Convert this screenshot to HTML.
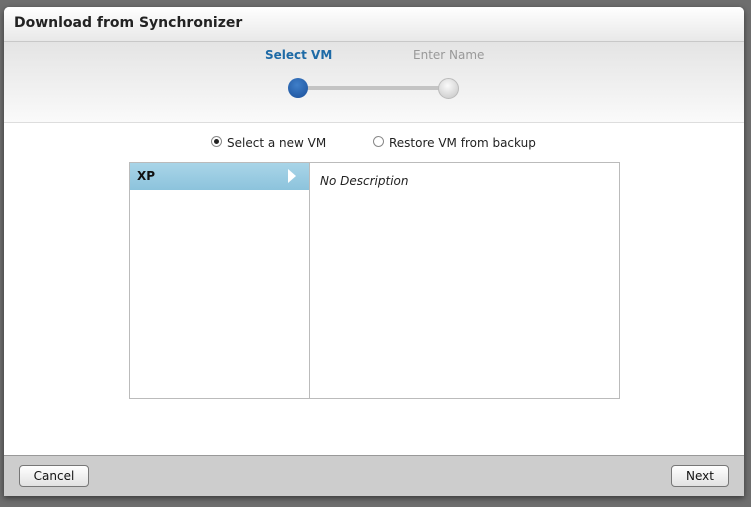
<!DOCTYPE html>
<html><head><style>
body{margin:0;width:751px;height:507px;background:#6e6e6e;font-family:"DejaVu Sans","Liberation Sans",sans-serif;overflow:hidden;position:relative}
.dlg{position:absolute;left:4px;top:7px;width:740px;height:489px;background:#fff;border-radius:5px 5px 0 0;overflow:hidden;box-shadow:0 2px 6px rgba(0,0,0,.5)}
.hdr{position:absolute;left:0;top:0;width:740px;height:34px;background:linear-gradient(#fff,#e8e8e8);border-bottom:1px solid #c8c8c8}
.hdr span{position:absolute;left:10px;top:8px;font-size:14px;font-weight:bold;color:#222}
.steps{position:absolute;left:0;top:35px;width:740px;height:80px;background:linear-gradient(#e4e4e4,#fafafa);border-bottom:1px solid #ddd}
.t{position:absolute;font-size:12px}
.line{position:absolute;left:300px;top:44px;width:140px;height:4px;background:#c4c4c4}
.c{position:absolute;width:20px;height:20px;border-radius:50%;top:36px}
.radio{position:absolute;top:129px;font-size:12px;color:#222}
.r{display:inline-block;width:9px;height:9px;border:1px solid #888;border-radius:50%;vertical-align:0;margin-right:5px;position:relative;background:#fff}
.box{position:absolute;left:125px;top:155px;width:489px;height:235px;border:1px solid #bbb}
.left{position:absolute;left:0;top:0;width:179px;height:235px;border-right:1px solid #bbb}
.sel{position:absolute;left:0;top:0;width:179px;height:27px;background:linear-gradient(#a9d5e8,#8cc3dc)}
.foot{position:absolute;left:0;top:448px;width:740px;height:41px;background:#cdcdcd;border-top:1px solid #999}
.btn{position:absolute;top:9px;height:20px;border:1px solid #777;border-radius:4px;background:linear-gradient(#fff,#e2e2e2);font-size:12px;text-align:center;line-height:20px;color:#111}
</style></head><body>
<div class="dlg">
<div class="hdr"><span>Download from Synchronizer</span></div>
<div class="steps">
<div class="t" style="left:261px;top:6px;color:#1d6aa6;font-weight:bold">Select VM</div>
<div class="t" style="left:409px;top:6px;color:#999">Enter Name</div>
<div class="line"></div>
<div class="c" style="left:284px;background:radial-gradient(circle at 45% 35%,#3f7fc9,#1a4f99)"></div>
<div class="c" style="left:434px;background:radial-gradient(circle at 45% 35%,#fafafa,#c4c4c4);border:1px solid #bbb;width:19px;height:19px"></div>
</div>
<div class="radio" style="left:207px"><span class="r"><span style="position:absolute;left:2px;top:2px;width:5px;height:5px;border-radius:50%;background:#222"></span></span>Select a new VM</div>
<div class="radio" style="left:369px"><span class="r"></span>Restore VM from backup</div>
<div class="box">
<div class="left"><div class="sel"><span style="position:absolute;left:7px;top:6px;font-size:12px;font-weight:bold;color:#111">XP</span><span style="position:absolute;left:158px;top:6px;width:0;height:0;border-left:8px solid #fff;border-top:7px solid transparent;border-bottom:7px solid transparent"></span></div></div>
<div style="position:absolute;left:190px;top:11px;font-size:12px;font-style:italic;color:#222">No Description</div>
</div>
<div class="foot">
<div class="btn" style="left:15px;width:68px">Cancel</div>
<div class="btn" style="left:667px;width:56px">Next</div>
</div>
</div>
</body></html>
